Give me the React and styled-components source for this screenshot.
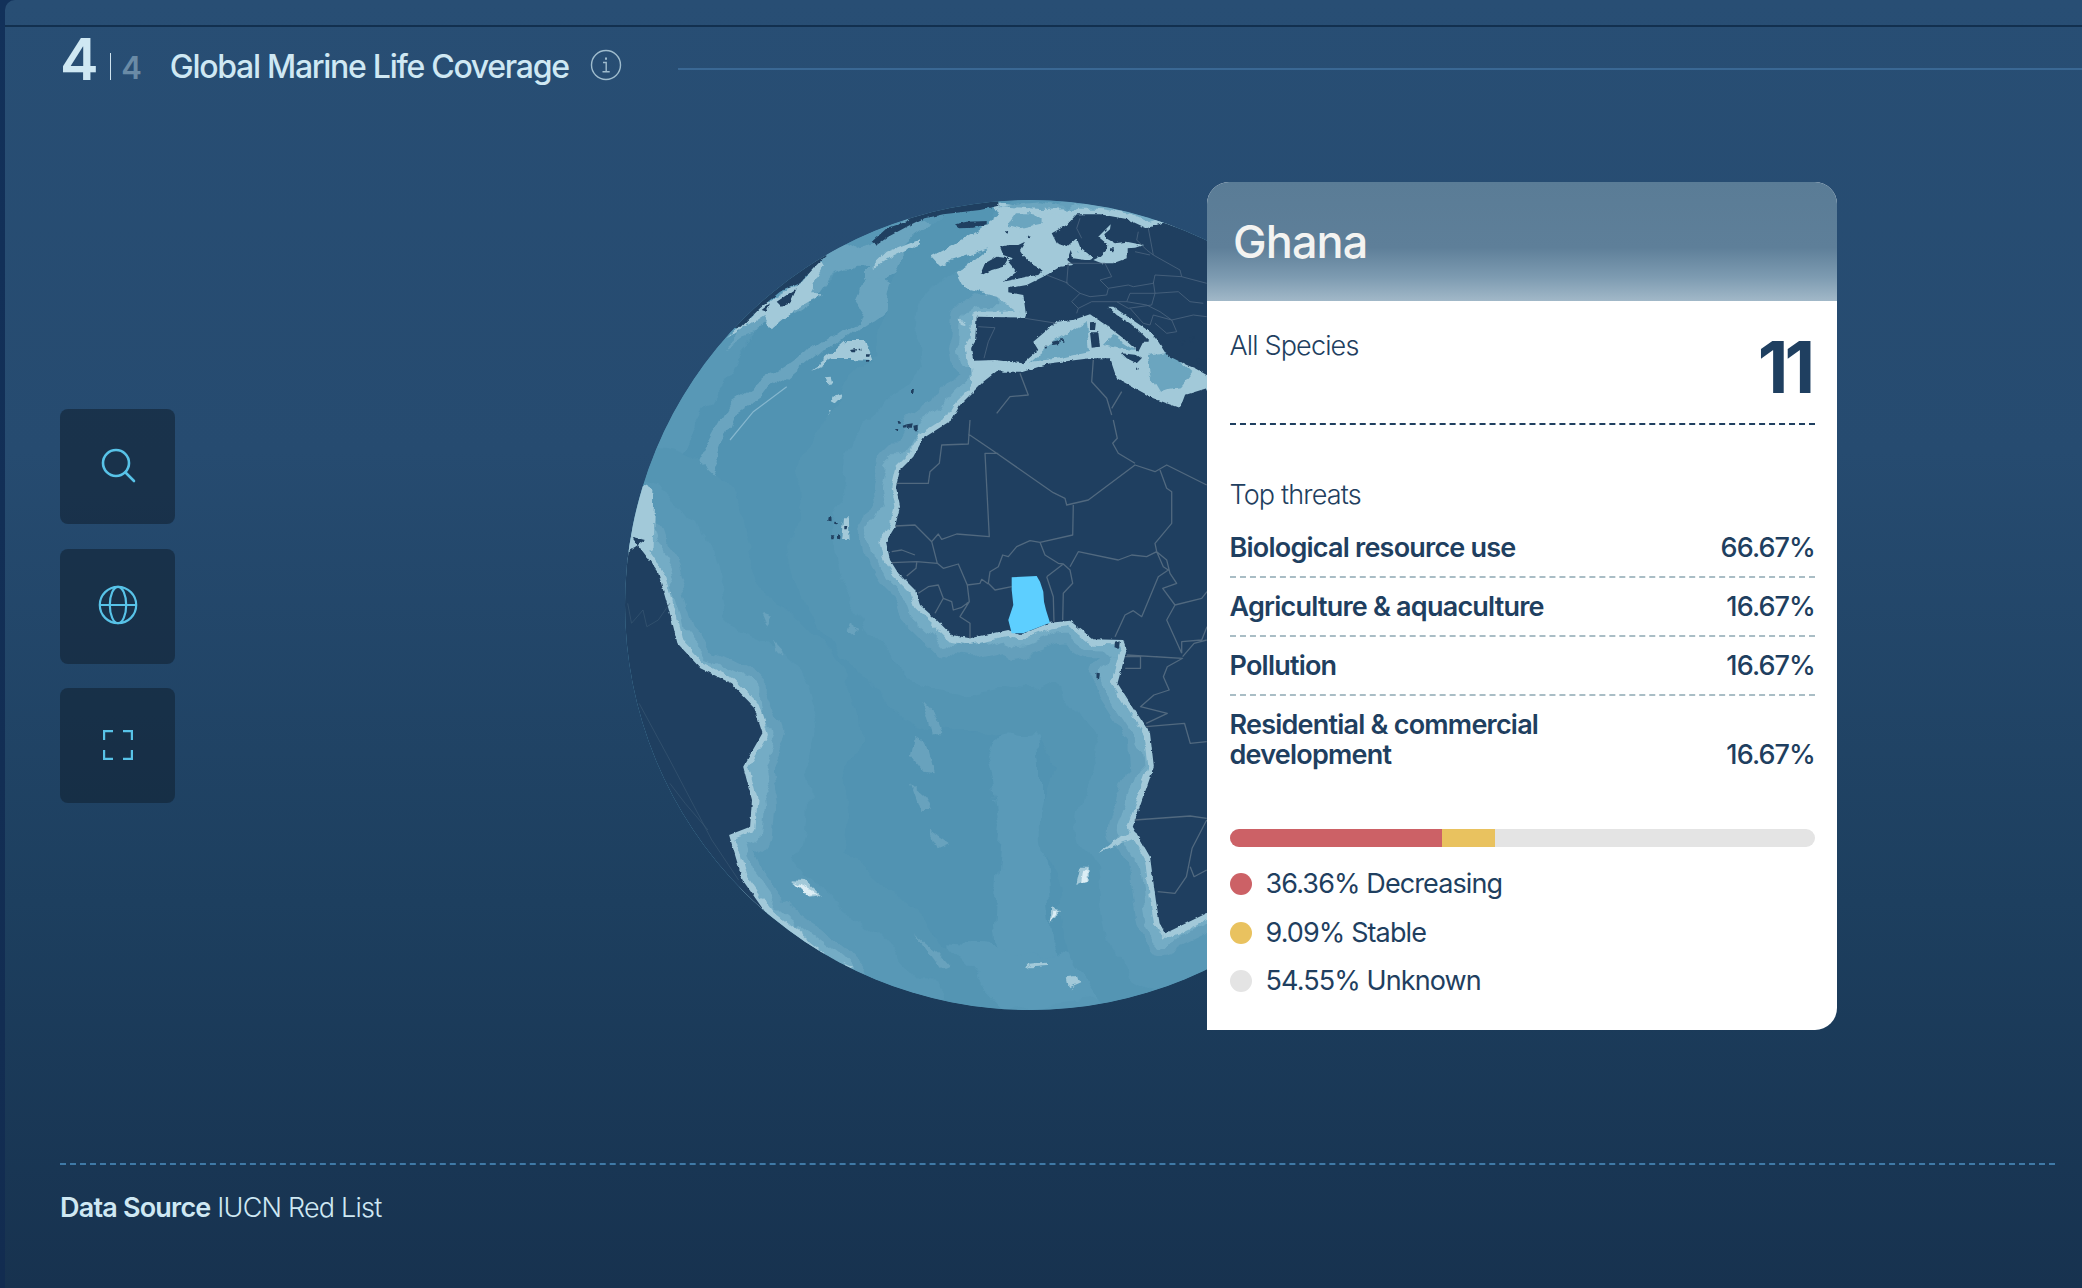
import React from "react";
import styled, { createGlobalStyle } from "styled-components";

const Global = createGlobalStyle`
  html, body { margin: 0; padding: 0; background: #11305a; }
  * { box-sizing: border-box; }
  body { font-family: Inter, "Liberation Sans", sans-serif; }
`;

const Page = styled.div`
  width: 2082px; height: 1288px; overflow: hidden;
  background: linear-gradient(#12315a, #122c50);
  padding-left: 5px;
`;
const Panel = styled.main`
  height: 100%; display: flex; flex-direction: column;
  border-top-left-radius: 10px;
  background: linear-gradient(180deg, #284e74 0%, #264b70 35%, #1d3f5f 70%, #17324f 100%);
`;
const TopStrip = styled.div`
  height: 27px; flex: none; border-bottom: 2px solid #12304f;
`;
const Header = styled.header`
  height: 83px; flex: none; display: flex; align-items: flex-start;
  padding: 9px 0 0 55px;
`;
const Count = styled.div`
  display: flex; align-items: flex-end; height: 46px; color: #cfe8f3;
`;
const Big = styled.span`
  font-size: 58px; line-height: 46px; font-weight: 600; letter-spacing: -1px; height: 46px;
`;
const Sep = styled.span`
  width: 1.5px; height: 27px; background: #cfe3ee; margin: 0 10px 2px 12px;
`;
const Small = styled.span`
  font-size: 31px; line-height: 24px; font-weight: 600; color: #6a8ba6; margin-bottom: 2px;
`;
const Title = styled.h1`
  margin: 13px 0 0 28px; font-size: 32px; line-height: 36px; font-weight: 500;
  letter-spacing: -1.28px; color: #cfe8f3; white-space: nowrap;
`;
const InfoWrap = styled.span`
  display: block; width: 32px; height: 32px; margin: 13px 0 0 21px; flex: none;
`;
const Rule = styled.div`
  flex: 1; height: 2px; margin: 32px 0 0 56px; background: #3a6894;
`;
const Stage = styled.section`
  flex: 1; position: relative; padding: 299px 0 0 55px;
`;
const Tools = styled.nav`
  display: flex; flex-direction: column; gap: 24.5px; width: 115px;
`;
const Tool = styled.button`
  width: 115px; height: 115px; padding: 0 0 2px; border: 0; border-radius: 8px;
  background: rgba(18, 36, 54, 0.62);
  display: flex; align-items: center; justify-content: center;
  color: #58c3e8;
`;
const GlobeSvg = styled.svg`
  position: absolute; left: 615px; top: 85px; width: 600px; height: 820px; display: block;
`;
const Card = styled.aside`
  position: absolute; left: 1202px; top: 72px; width: 630px; height: 848px;
  background: #fff; border-radius: 22px 22px 22px 0; overflow: hidden; color: #1f3f60;
`;
const CardHead = styled.div`
  height: 119px; padding: 33px 0 0 26px;
  background: linear-gradient(180deg, #5a7c96 0%, #5e7f99 55%, #7d9bb1 80%, #a1b8c8 100%);
  color: #f3f3f1; font-size: 45px; line-height: 54px; font-weight: 500; letter-spacing: -0.9px;
`;
const CardBody = styled.div`
  padding: 0 22px 0 22.5px;
`;
const SpeciesRow = styled.div`
  height: 124px; display: flex; justify-content: space-between;
  border-bottom: 2px dashed #1f3f60;
`;
const Label = styled.div`
  font-size: 27px; line-height: 34px; font-weight: 300; letter-spacing: -0.85px;
`;
const SpeciesLabel = styled(Label)`
  margin-top: 28px;
`;
const SpeciesNum = styled.div`
  font-size: 71px; line-height: 80px; font-weight: 700; letter-spacing: -4px; margin-top: 26px; padding-right: 4px;
`;
const ThreatTitle = styled(Label)`
  margin-top: 53px; margin-bottom: 7px;
`;
const ThreatRow = styled.div`
  display: flex; justify-content: space-between; align-items: flex-end;
  padding: 13.5px 0 13.5px;
  font-size: 27px; line-height: 30px; font-weight: 600; letter-spacing: -0.78px;
  border-bottom: ${p => (p.$last ? "none" : "2px dashed #a9bdc5")};
`;
const ThreatName = styled.span`
  max-width: 340px;
`;
const ThreatVal = styled.span`
  font-weight: 500; letter-spacing: -0.9px;
`;
const Bar = styled.div`
  margin-top: 46px; height: 18px; border-radius: 9px; overflow: hidden; display: flex; background: #e4e4e4;
`;
const Seg = styled.div`
  height: 100%; width: ${p => p.$w}px; background: ${p => p.$c};
`;
const Legend = styled.ul`
  list-style: none; margin: 19px 0 0; padding: 0; display: flex; flex-direction: column; gap: 12.5px;
`;
const LegendItem = styled.li`
  display: flex; align-items: center; gap: 14px; height: 36px;
  font-size: 27px; line-height: 36px; font-weight: 400; letter-spacing: -0.9px;
`;
const Dot = styled.i`
  width: 22px; height: 22px; border-radius: 50%; background: ${p => p.$c}; flex: none;
`;
const Footer = styled.footer`
  height: 125px; flex: none; margin: 0 27px 0 55px;
  border-top: 2px dashed #3f7aa8; padding-top: 26px;
  font-size: 27px; line-height: 34px; color: #cfe8f3; letter-spacing: -0.8px; font-weight: 300;
  & b { font-weight: 600; }
`;

/* Map outlines were traced in crops of different scale; each helper maps a crop's points to page coordinates. */
const crop = (ox, oy, sx, sy) => s =>
  s.trim().split(/\s+/).map(p => {
    const [x, y] = p.split(",").map(Number);
    return `${(ox + x * sx).toFixed(1)},${(oy + y * sy).toFixed(1)}`;
  });
const eu = crop(860, 195, 1 / 3, 1 / 3);
const gr = crop(620, 195, 1 / 3, 1 / 3);
const af = crop(880, 420, 1 / 3, 1 / 3);
const z5 = crop(620, 190, 1 / 2.613, 1 / 3);
const z6 = crop(620, 600, 1 / 2.613, 1 / 3);
const poly = (...parts) => "M" + parts.flat().join(" L") + " Z";
const line = (...parts) => "M" + parts.flat().join(" L");

const AFRICA = poly(
  eu("415,525 430,530 490,530 570,505 690,490 750,490 760,520 770,550 880,610 960,640 975,600 1040,580"),
  ["1300,590", "1300,880"],
  z6("1800,870 1533,940 1425,1000 1410,970 1400,900 1385,770 1340,680 1395,500 1385,400 1345,330 1300,250"),
  af("740,690 730,660 640,658 570,602 510,608 420,645 385,630 270,655 215,645 170,600 120,555 105,510 55,460 30,420 18,365 45,320 60,260 48,200 60,150 100,110 130,55 215,0"),
  eu("300,630 370,560")
);
const EUROPE = poly(
  eu("1200,60 905,85 860,100 800,72 720,58 650,58 620,90 575,115 590,145 620,155 650,130 660,155 700,190 690,195 675,195 640,190 632,165 622,195 640,210 600,215 560,240 500,270 445,280 445,292 490,300 498,360 495,368 350,365 345,440 333,460 340,497 405,495 490,505 535,465 520,440 590,380 640,375 690,358 745,395 790,430 835,470 850,440 870,440 840,410 810,385 770,360 745,335 760,335 810,370 870,410 895,440 920,480 980,510 1005,520 1040,540 1200,560")
);
const AMERICAS = poly(
  ["500,640", "645,540"],
  z5("30,1040 70,1100 100,1150 135,1290"),
  z6("150,130 210,205 290,250 350,320 372,400 322,500 345,600 340,680 285,705 320,840 385,945 560,1100 800,1400"),
  ["500,1100"]
);
const ARCTIC = poly(gr("365,395 420,340 480,290 540,265 590,210 620,180 400,180 200,400"));
const ARCTIC2 = poly(eu("150,80 250,58 360,45 415,32 415,-20 100,20"));
const MAIN_LAND = [AFRICA, EUROPE, AMERICAS].join(" ");
const NORTH_LAND = [ARCTIC, ARCTIC2].join(" ");

const ISLES = [
  eu("785,475 830,480 845,490 830,505 800,490"),
  eu("690,382 708,380 705,405 690,405"),
  eu("690,412 715,412 720,455 695,458"),
  eu("575,440 600,435 597,447 580,450"),
  eu("552,455 562,455 558,462"),
  eu("600,433 612,433 610,440 603,440"),
  eu("828,518 836,518 835,524 829,524"),
  eu("420,155 445,150 475,150 495,140 480,165 490,180 520,210 548,225 535,240 500,245 430,260 470,230 445,200 455,190 430,180"),
  eu("362,235 375,205 410,185 445,190 430,215 395,225 370,238"),
  eu("285,88 320,80 380,78 380,88 340,98 300,100"),
  eu("35,140 80,100 230,50 150,90 85,125 50,150"),
  eu("500,125 510,125 505,135"),
  eu("435,108 445,108 440,116"),
  gr("470,320 530,280 510,325 485,335"),
  gr("425,345 450,325 440,350"),
  gr("690,465 708,462 705,472 695,472"),
  gr("716,461 725,461 723,466 716,466"),
  gr("738,478 750,478 748,485 738,485"),
  gr("741,495 748,495 746,500 741,500"),
  gr("870,585 882,585 880,594 872,594"),
  gr("833,678 842,678 842,686 835,686"),
  gr("848,692 860,688 860,697 850,698"),
  gr("860,688 878,685 876,698 862,698"),
  gr("880,695 893,692 893,706 882,706"),
  gr("826,702 835,702 833,708 827,708"),
  z5("545,982 552,982 553,994 544,992"),
  z5("560,995 570,997 568,1003 560,1002"),
  z5("586,1008 594,1008 592,1018 586,1018"),
  z5("551,1036 560,1036 558,1048 552,1048"),
  z5("567,1033 576,1036 575,1048 567,1046"),
  z6("1293,128 1306,124 1304,146 1292,142"),
  z6("1245,218 1254,220 1252,236 1245,234"),
  eu("960,440 975,435 970,450"),
  eu("985,430 1000,425 1000,440 988,442"),
  eu("1010,490 1035,495 1035,510 1012,505")
].map(p => poly(p)).join(" ");

const PALE = [
  eu("350,110 420,60 400,25 640,50 650,120 640,215 560,245 445,285 500,330 470,350 410,305 330,285 305,265 290,235 385,160 235,210 212,185"),
  eu("340,490 420,480 590,370 700,345 760,330 1040,420 1040,600 960,660 760,570 740,500 490,540 410,535"),
  eu("400,25 640,45 880,85 905,90 650,70"),
  eu("345,360 480,345 500,375 345,378"),
  eu("330,440 350,505 420,515 370,570 340,560"),
  eu("1020,330 1040,325 1040,420 1025,420"),
  gr("320,430 430,360 455,400 530,340 605,295 570,295 615,210 590,205 540,265 420,335"),
  gr("570,525 640,470 680,435 735,435 757,495 700,492 640,492"),
  gr("618,550 635,548 640,565 622,568"),
  gr("645,600 665,595 660,612 642,630 632,625"),
  gr("624,648 632,648 628,660"),
  gr("750,220 800,170 900,130 900,145 820,180 765,215"),
  z5("30,900 60,880 90,900 85,1080 40,1090 25,1030"),
  z5("885,392 905,396 905,408 888,405"),
  z5("580,985 598,985 600,1050 575,1050"),
  z6("445,838 480,840 525,885 495,890"),
  z6("1205,800 1225,800 1225,840 1195,855"),
  z6("1130,925 1155,930 1125,970"),
  z6("1300,715 1345,690 1345,715 1280,745 1250,760"),
  z6("1060,1095 1115,1088 1120,1098 1070,1102"),
  z6("1170,1135 1200,1130 1205,1150 1175,1165"),
  z6("580,1085 610,1100 600,1105")
];
const BALTIC = eu("735,105 752,88 750,103 733,118 738,130 765,145 800,140 850,150 825,158 800,160 800,190 760,205 725,205 700,195 720,185 740,165 745,150 715,125");
const MID_NORTH = [
  eu("0,135 210,95 350,110 212,185 235,210 190,240 100,230 0,260"),
  eu("90,250 130,330 260,230 330,290 460,340 300,350 280,460 340,480 230,560 150,500 120,420"),
  gr("780,240 830,300 700,390 500,560 360,650 290,830 240,900 210,860 340,620 520,500 690,380 730,250"),
  gr("620,180 760,120 900,70 900,130 740,200 640,240 600,290 560,340 430,420 320,460")
];
const MID_SEA = [
  eu("445,90 470,55 520,55 550,85 480,100"),
  eu("410,35 540,22 640,42 540,45"),
  eu("510,500 580,440 680,375 690,470 600,490"),
  eu("735,450 760,420 830,465 770,460"),
  eu("860,480 930,470 1000,530 960,580 900,590 870,540")
];
const MID_SOUTH = [
  z6("1030,250 1080,290 1100,470 1100,730 1130,1020 1180,1170 1000,1170 980,970 1000,670 960,470"),
  z6("780,170 880,210 820,320 640,240 650,130"),
  z6("900,130 1010,145 1080,210 960,240 860,200"),
  z6("850,1030 1080,1050 1300,1110 1533,1060 1533,1170 860,1250"),
  z6("380,20 560,180 400,240 330,100")
];
const LIGHT = [
  z6("770,410 800,430 820,520 790,515 760,470"),
  z6("760,550 800,590 815,630 785,630"),
  z6("790,300 830,350 845,400 815,400"),
  z6("810,690 860,730 830,745"),
  z6("770,1000 830,1060 860,1100 840,1110"),
  z6("370,40 395,50 385,80"),
  z6("400,120 425,150 430,170 410,160"),
  z6("600,70 625,90 615,110 595,90")
];
const SPECKS = [
  z6("455,845 480,860 515,882 490,885"),
  z6("1210,810 1222,805 1222,845 1205,850"),
  z6("1135,935 1150,930 1125,965")
];

const BORDERS = [
  af("270,0 265,72 185,75 178,130 150,155 145,190 50,190"),
  af("265,42 350,100 520,218 555,235 560,255 625,240 765,135 825,155 860,135 980,195"),
  af("355,100 315,100 328,350 230,342 185,358 175,342 155,365 105,315 45,318"),
  af("580,255 578,345 480,367 450,362 410,380 385,410 368,405 355,440 330,455 325,490 345,510 395,500"),
  af("155,365 172,430 190,445 235,432 262,495 268,545 260,550"),
  af("262,495 300,490 305,478 325,492"),
  af("172,430 110,425 35,428"),
  af("35,395 65,390 105,405"),
  af("110,428 108,445 80,468"),
  af("115,520 145,500 175,495 190,535 165,580"),
  af("190,535 215,545 220,570 245,562 268,545 240,590 270,610 270,655"),
  af("480,367 495,405 535,430 550,432 570,450 578,490 550,520 548,600"),
  af("500,470 550,432"),
  af("500,470 520,530 522,605"),
  af("570,440 595,395 715,420 755,405 800,410 830,395 860,420 870,460 890,490 848,505 885,555 860,600 905,700"),
  af("830,395 825,370 875,310 875,215 860,205 840,150"),
  af("830,395 850,440 865,450 835,470 785,590 760,572 735,585 705,650"),
  af("885,555 965,535 981,515"),
  af("981,620 965,660 905,665 905,700"),
  af("740,705 905,715"),
  af("700,0 712,55 698,70 715,100 765,130"),
  eu("480,535 505,600 450,605 410,655"),
  eu("700,495 695,560 740,610 755,660"),
  eu("755,640 785,590"),
  z6("1320,170 1360,170 1360,205 1320,205"),
  z6("1400,170 1470,175 1430,200 1420,230 1435,270 1395,285 1360,320 1430,340 1375,370"),
  z6("1375,380 1475,370 1490,430 1533,425"),
  z6("1533,120 1500,130 1470,170"),
  z6("1345,660 1490,648 1533,655"),
  z6("1533,660 1495,745 1480,830 1450,880 1405,875"),
  z6("1490,800 1500,830 1533,810")
].map(p => line(p)).join(" ");

const EURO_BORDERS = [
  eu("560,240 625,265"),
  eu("625,205 620,265 660,295 635,320 655,340 650,355"),
  eu("495,370 590,385"),
  eu("355,395 405,398 385,440 372,490"),
  eu("735,205 755,245 720,255 745,280 805,270 820,275 880,265 885,240 965,245"),
  eu("880,260 885,295 810,295 800,320 770,320"),
  eu("745,280 740,300 690,305 660,295"),
  eu("655,340 695,320 770,320 805,340 875,330 885,295 955,290 990,320 1030,325"),
  eu("810,340 850,385 870,390 880,360 935,375 1000,360 1040,365"),
  eu("800,320 860,330 900,350 935,375 950,410 920,415 885,385"),
  eu("865,100 880,180 960,225 965,245 1040,265"),
  eu("660,70 650,100 665,130"),
  eu("835,110 830,135 860,165 880,180"),
  eu("825,170 870,180"),
  eu("625,205 735,205")
].map(p => line(p)).join(" ");

const AMERICA_BORDERS = [
  z6("50,310 130,480 240,720 310,840"),
  z6("130,550 170,610 230,690"),
  z5("20,1240 30,1300 60,1260 70,1310 100,1290 130,1240")
].map(p => line(p)).join(" ");

const GHANA = poly(af("395,472 470,468 480,485 490,515 492,545 498,570 510,608 430,640 395,640 385,600 400,555 395,510"));

const BANDS = [
  { w: 190, c: "#5495b3" },
  { w: 110, c: "#5898b6" },
  { w: 44, c: "#649fbb" },
  { w: 26, c: "#74acc5" }
];

const noiseFilter = (id, freq, scale, seed) => (
  <filter id={id} x="-5%" y="-5%" width="110%" height="110%" colorInterpolationFilters="sRGB">
    <feTurbulence type="fractalNoise" baseFrequency={freq} numOctaves="4" seed={seed} />
    <feDisplacementMap in="SourceGraphic" scale={scale} xChannelSelector="R" yChannelSelector="G" />
  </filter>
);

const Globe = () => (
  <GlobeSvg viewBox="620 195 600 820">
    <defs>
      <clipPath id="sphere"><circle cx="1030" cy="605" r="405" /></clipPath>
      {noiseFilter("rough", 0.02, 30, 7)}
      {noiseFilter("fine", 0.08, 8, 3)}
      {noiseFilter("grain", 0.2, 3, 9)}
    </defs>
    <g clipPath="url(#sphere)">
      <circle cx="1030" cy="605" r="405" fill="#5193b2" />
      <g filter="url(#rough)">
        <circle cx="1030" cy="605" r="405" fill="none" stroke="#5898b6" strokeWidth="46" />
        {MID_SOUTH.map(d => <path key={d.join()} d={poly(d)} fill="#5a9ab8" />)}
        {MID_NORTH.map(d => <path key={d.join()} d={poly(d)} fill="#6aa4bf" />)}
        {BANDS.map(b => (
          <path key={b.w} d={MAIN_LAND} fill="none" stroke={b.c} strokeWidth={b.w} strokeLinejoin="round" />
        ))}
      </g>
      <g filter="url(#fine)">
        <path d={MAIN_LAND} fill="none" stroke="#a2c9d9" strokeWidth="11" strokeLinejoin="round" />
        {PALE.map(d => <path key={d.join()} d={poly(d)} fill="#a2c9d9" />)}
        {LIGHT.map(d => <path key={d.join()} d={poly(d)} fill="#68a2bd" />)}
        {MID_SEA.map(d => <path key={d.join()} d={poly(d)} fill="#6ba5bf" />)}
        {SPECKS.map(d => <path key={d.join()} d={poly(d)} fill="#dceef5" />)}
      </g>
      <path d={line(gr("330,735 400,650 500,575"))} fill="none" stroke="#86b7ce" strokeWidth="1.2" />
      <g filter="url(#grain)">
        <path d={MAIN_LAND} fill="#1f3f60" />
        <path d={NORTH_LAND} fill="#1f3f60" />
        <path d={ISLES} fill="#1f3f60" />
        <path d={poly(BALTIC)} fill="#a2c9d9" />
        <path d={poly(eu("750,160 762,160 760,172 750,170"))} fill="#1f3f60" />
      </g>
      <g fill="none" strokeLinejoin="round">
        <path d={BORDERS} stroke="#51697f" strokeWidth="1.3" />
        <path d={EURO_BORDERS} stroke="#4c6680" strokeWidth="0.8" />
        <path d={AMERICA_BORDERS} stroke="#3d5a76" strokeWidth="0.6" />
      </g>
      <path d={GHANA} fill="#5dcfff" />
    </g>
  </GlobeSvg>
);

const InfoIcon = () => (
  <svg width="32" height="32" viewBox="0 0 32 32" fill="none" stroke="#9fbccd" strokeWidth="1.4">
    <circle cx="16" cy="16" r="14.5" />
    <path d="M13 13.5h3.2v9M12.5 22.7h7.2" />
    <path d="M16 8.5v2.2" strokeWidth="2" />
  </svg>
);
const SearchIcon = () => (
  <svg width="38" height="38" viewBox="0 0 38 38" fill="none" stroke="currentColor" strokeWidth="2.6" strokeLinecap="round">
    <circle cx="17" cy="16" r="13" />
    <path d="M26.5 25.5L35 34" />
  </svg>
);
const GlobeIcon = () => (
  <svg width="40" height="40" viewBox="0 0 40 40" fill="none" stroke="currentColor" strokeWidth="2.2">
    <circle cx="20" cy="20" r="18.2" />
    <ellipse cx="20" cy="20" rx="8.2" ry="18.2" />
    <path d="M1.8 20h36.4" />
  </svg>
);
const FrameIcon = () => (
  <svg width="30" height="30" viewBox="0 0 30 30" fill="none" stroke="currentColor" strokeWidth="2.4">
    <path d="M1 10V1h9M20 1h9v9M29 20v9h-9M10 29H1v-9" />
  </svg>
);

const threats = [
  ["Biological resource use", "66.67%"],
  ["Agriculture & aquaculture", "16.67%"],
  ["Pollution", "16.67%"],
  ["Residential & commercial development", "16.67%"]
];
const legend = [
  ["#cc6166", "36.36% Decreasing"],
  ["#e9c25f", "9.09% Stable"],
  ["#e4e4e4", "54.55% Unknown"]
];

export default function App() {
  return (
    <Page>
      <Global />
      <Panel>
        <TopStrip />
        <Header>
          <Count>
            <Big>4</Big>
            <Sep />
            <Small>4</Small>
          </Count>
          <Title>Global Marine Life Coverage</Title>
          <InfoWrap><InfoIcon /></InfoWrap>
          <Rule />
        </Header>
        <Stage>
          <Tools>
            <Tool aria-label="Search"><SearchIcon /></Tool>
            <Tool aria-label="Globe"><GlobeIcon /></Tool>
            <Tool aria-label="Fullscreen"><FrameIcon /></Tool>
          </Tools>
          <Globe />
          <Card>
            <CardHead>Ghana</CardHead>
            <CardBody>
              <SpeciesRow>
                <SpeciesLabel>All Species</SpeciesLabel>
                <SpeciesNum>11</SpeciesNum>
              </SpeciesRow>
              <ThreatTitle>Top threats</ThreatTitle>
              {threats.map(([n, v], i) => (
                <ThreatRow key={n} $last={i === threats.length - 1}>
                  <ThreatName>{n}</ThreatName>
                  <ThreatVal>{v}</ThreatVal>
                </ThreatRow>
              ))}
              <Bar>
                <Seg $w={212} $c="#cc6166" />
                <Seg $w={53} $c="#e9c25f" />
              </Bar>
              <Legend>
                {legend.map(([c, t]) => (
                  <LegendItem key={t}><Dot $c={c} />{t}</LegendItem>
                ))}
              </Legend>
            </CardBody>
          </Card>
        </Stage>
        <Footer><b>Data Source</b> IUCN Red List</Footer>
      </Panel>
    </Page>
  );
}
